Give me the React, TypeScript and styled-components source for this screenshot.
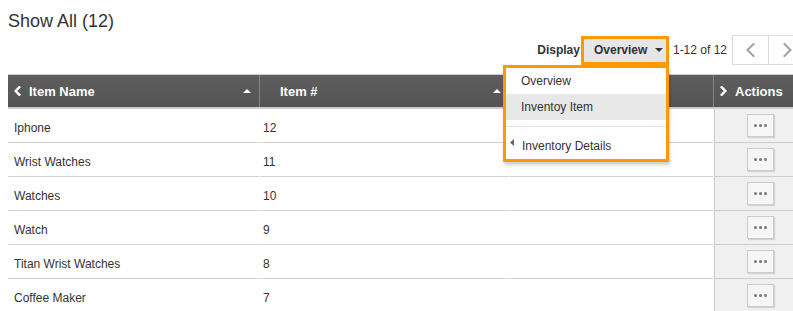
import React from "react";
import styled, { createGlobalStyle } from "styled-components";

const GlobalStyle = createGlobalStyle`
  html, body {
    margin: 0;
    padding: 0;
    overflow: hidden;
    background: #ffffff;
  }
`;

const COLS = "251px 249px 203px 92px";

const Page = styled.div`
  width: 798px;
  padding: 8px;
  font-family: "Liberation Sans", Arial, sans-serif;
  color: #333;
`;

const Title = styled.h1`
  margin: 3px 0 0;
  font-size: 18px;
  line-height: 20px;
  font-weight: normal;
  color: #333;
`;

const Toolbar = styled.div`
  display: flex;
  justify-content: flex-end;
  align-items: center;
  height: 30px;
  margin-top: 4px;
  font-size: 12px;
`;

const Label = styled.span`
  font-weight: bold;
  margin-right: 1px;
`;

const DropdownWrap = styled.div`
  position: relative;
`;

const DropButton = styled.div`
  box-sizing: border-box;
  width: 88px;
  height: 29px;
  border: 3px solid #ff9900;
  background: #e6e6e6;
  display: flex;
  align-items: center;
  gap: 8px;
  padding-left: 10px;
  font-weight: bold;
  color: #333;
`;

const Menu = styled.div`
  position: absolute;
  top: 29px;
  right: 0;
  width: 166px;
  box-sizing: border-box;
  border: 3px solid #ff9900;
  background: #fff;
  box-shadow: 1px 3px 3px rgba(0, 0, 0, 0.18);
  z-index: 10;
`;

const MenuItem = styled.div<{ $active?: boolean; $sub?: boolean }>`
  height: 26px;
  display: flex;
  align-items: center;
  gap: 8px;
  padding-left: ${(p) => (p.$sub ? "4px" : "15px")};
  background: ${(p) => (p.$active ? "#e8e8e8" : "transparent")};
  font-size: 12px;
  color: #333;
`;

const MenuDivider = styled.div`
  height: 1px;
  background: #e2e2e2;
  margin: 6px 0;
`;

const Range = styled.span`
  margin: 0 5px 0 4px;
`;

const Pager = styled.div`
  display: flex;
`;

const PagerButton = styled.div<{ $width: number; $joined?: boolean }>`
  box-sizing: border-box;
  width: ${(p) => p.$width}px;
  height: 30px;
  border: 1px solid #dcdcdc;
  margin-left: ${(p) => (p.$joined ? "-1px" : "0")};
  display: flex;
  align-items: center;
  justify-content: center;
  background: #fff;
`;

const Table = styled.div`
  margin-top: 9px;
`;

const HeaderRow = styled.div`
  display: grid;
  grid-template-columns: ${COLS};
  column-gap: 1px;
  background: #858585;
  border-top: 1px solid #cccccc;
  border-bottom: 2px solid #cccccc;
`;

const HeaderCell = styled.div<{ $pad: number }>`
  height: 32px;
  display: flex;
  align-items: center;
  gap: 8px;
  padding: 0 8px 0 ${(p) => p.$pad}px;
  background: linear-gradient(#5e5e5e, #545454);
  color: #fff;
  font-weight: bold;
  font-size: 13px;
`;

const SortArrow = styled.span`
  margin-left: auto;
  width: 0;
  height: 0;
  border-left: 4px solid transparent;
  border-right: 4px solid transparent;
  border-bottom: 4px solid #fff;
`;

const Row = styled.div`
  display: grid;
  grid-template-columns: ${COLS};
  column-gap: 1px;
`;

const Cell = styled.div<{ $pad: number }>`
  height: 29px;
  padding-top: 4px;
  display: flex;
  align-items: center;
  padding-left: ${(p) => p.$pad}px;
  border-bottom: 1px solid #d2d2d2;
  font-size: 12px;
  color: #333;
`;

const ActionsCell = styled.div`
  height: 33px;
  display: flex;
  align-items: center;
  justify-content: center;
  background: #f0f0f0;
  border-left: 1px solid #cccccc;
  border-bottom: 1px solid #cccccc;
`;

const ActionButton = styled.div`
  box-sizing: border-box;
  width: 27px;
  height: 23px;
  border: 1px solid #cccccc;
  background: #f6f6f6;
  box-shadow: 1px 1px 1px rgba(0, 0, 0, 0.12);
  display: flex;
  align-items: center;
  justify-content: center;
  gap: 2px;
`;

const Dot = styled.span`
  width: 3px;
  height: 3px;
  border-radius: 50%;
  background: #777;
`;

const Chevron = ({ dir, color, w, h, sw }: { dir: "left" | "right"; color: string; w: number; h: number; sw: number }) => {
  const pts =
    dir === "left"
      ? `${w - sw / 2 - 0.5},${sw / 2} ${sw / 2 + 0.5},${h / 2} ${w - sw / 2 - 0.5},${h - sw / 2}`
      : `${sw / 2 + 0.5},${sw / 2} ${w - sw / 2 - 0.5},${h / 2} ${sw / 2 + 0.5},${h - sw / 2}`;
  return (
    <svg width={w} height={h} viewBox={`0 0 ${w} ${h}`} style={{ display: "block", flexShrink: 0 }}>
      <polyline points={pts} fill="none" stroke={color} strokeWidth={sw} strokeLinecap="square" />
    </svg>
  );
};

const CaretDown = () => (
  <svg width="8" height="4" viewBox="0 0 8 4" style={{ display: "block" }}>
    <polygon points="0,0 8,0 4,4" fill="#333" />
  </svg>
);

const CaretLeft = () => (
  <svg width="4" height="7" viewBox="0 0 4 7" style={{ display: "block", marginTop: -6 }}>
    <polygon points="4,0 4,7 0,3.5" fill="#666" />
  </svg>
);

const rows = [
  { name: "Iphone", num: "12" },
  { name: "Wrist Watches", num: "11" },
  { name: "Watches", num: "10" },
  { name: "Watch", num: "9" },
  { name: "Titan Wrist Watches", num: "8" },
  { name: "Coffee Maker", num: "7" },
];

export default function App() {
  return (
    <>
      <GlobalStyle />
      <Page>
        <Title>Show All (12)</Title>
        <Toolbar>
          <Label>Display</Label>
          <DropdownWrap>
            <DropButton>
              <span>Overview</span>
              <CaretDown />
            </DropButton>
            <Menu>
              <MenuItem>Overview</MenuItem>
              <MenuItem $active>Inventoy Item</MenuItem>
              <MenuDivider />
              <MenuItem $sub>
                <CaretLeft />
                <span>Inventory Details</span>
              </MenuItem>
            </Menu>
          </DropdownWrap>
          <Range>1-12 of 12</Range>
          <Pager>
            <PagerButton $width={37}>
              <Chevron dir="left" color="#a0a0a0" w={9} h={14} sw={2} />
            </PagerButton>
            <PagerButton $width={38} $joined>
              <Chevron dir="right" color="#a0a0a0" w={9} h={14} sw={2} />
            </PagerButton>
          </Pager>
        </Toolbar>
        <Table>
          <HeaderRow>
            <HeaderCell $pad={6}>
              <Chevron dir="left" color="#fff" w={7} h={10} sw={2.4} />
              <span>Item Name</span>
              <SortArrow />
            </HeaderCell>
            <HeaderCell $pad={20}>
              <span>Item #</span>
              <SortArrow />
            </HeaderCell>
            <HeaderCell $pad={6} />
            <HeaderCell $pad={6}>
              <Chevron dir="right" color="#fff" w={7} h={10} sw={2.4} />
              <span>Actions</span>
            </HeaderCell>
          </HeaderRow>
          {rows.map((r) => (
            <Row key={r.name}>
              <Cell $pad={6}>{r.name}</Cell>
              <Cell $pad={3}>{r.num}</Cell>
              <Cell $pad={6} />
              <ActionsCell>
                <ActionButton>
                  <Dot />
                  <Dot />
                  <Dot />
                </ActionButton>
              </ActionsCell>
            </Row>
          ))}
        </Table>
      </Page>
    </>
  );
}
